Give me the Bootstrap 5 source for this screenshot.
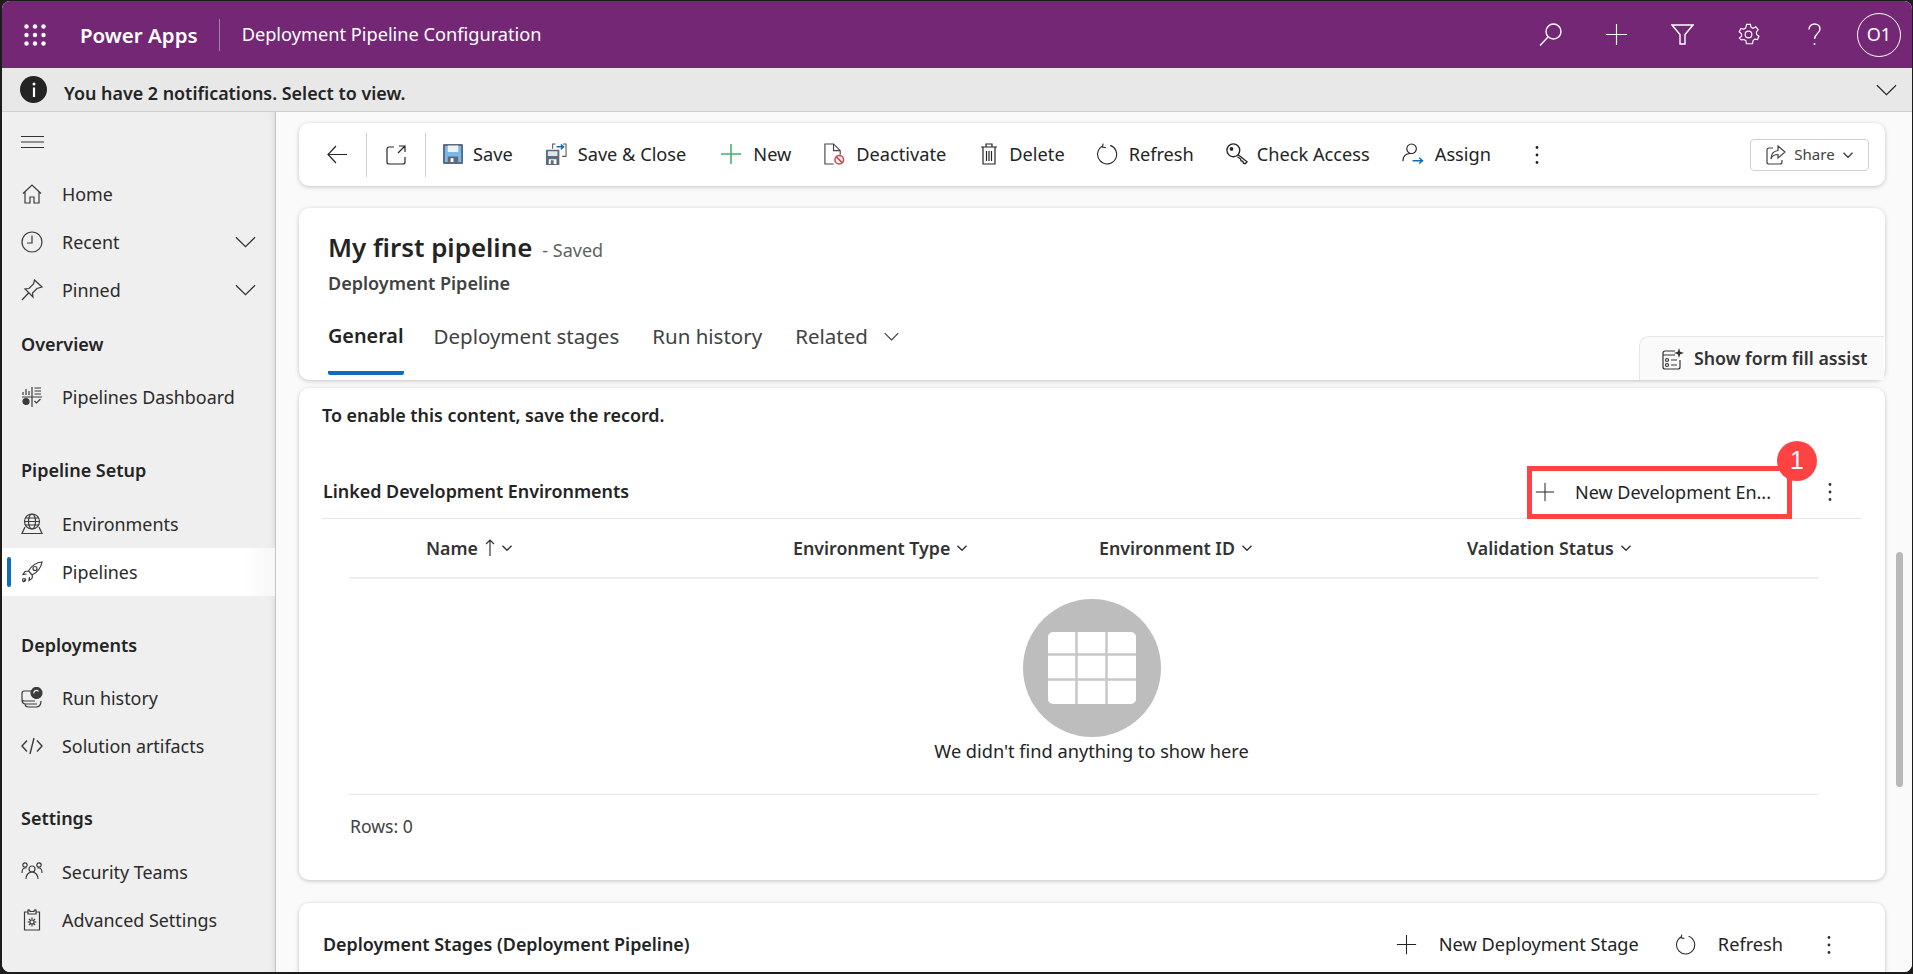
<!DOCTYPE html>
<html lang="en">
<head>
<meta charset="UTF-8">
<title>Deployment Pipeline Configuration - Power Apps</title>
<link href="https://cdn.jsdelivr.net/npm/bootstrap@5.3.0/dist/css/bootstrap.min.css" rel="stylesheet">
<style>
html, body { height: 100%; }
body { background: #1c1c1c; overflow: hidden; font-family: "Noto Sans", "Open Sans", sans-serif; font-size: 18px; color: #242424; }
svg { display: block; flex: none; fill: none; stroke: currentColor; stroke-width: 1.2; }
.app-frame { margin: 1px 1px 2px 2px; height: calc(100vh - 3px); border-radius: 8px; overflow: hidden; display: flex; flex-direction: column; background: #fafafa; }

.top-bar { height: 67px; background: #742774; color: #fff; flex: none; }
.waffle { margin-left: 22px; }
.brand { font-size: 20.5px; font-weight: 600; margin-left: 34px; padding-right: 21px; border-right: 1px solid #a77fa7; line-height: 32px; }
.app-title { font-size: 18.2px; margin-left: 22px; }
.top-ico { width: 23px; height: 23px; margin-right: 43px; }
.me-circle { width: 44px; height: 44px; border: 1px solid #fff; border-radius: 50%; font-size: 18px; margin-right: 11px; margin-left: -12px; }

.notif-bar { height: 44px; background: #e8e8e8; border-bottom: 1px solid #cfcfcf; flex: none; font-weight: 600; padding-left: 18px; padding-right: 15px; font-size: 17.9px; }
.notif-dot { width: 27px; height: 27px; border-radius: 50%; background: #242424; color: #fff; margin-right: 17px; }
.notif-text { padding-top: 7px; }

.side-nav { width: 274px; background: #efefef; border-right: 1px solid #c4c4c4; box-shadow: inset -8px 0 8px -8px #d8d8d8; flex: none; padding-top: 24px; }
.burger { margin: 0 0 22px 19px; color: #333; }
.side-link { height: 48px; padding: 0 19px; color: #2b2b2b; gap: 19px; font-size: 17.9px; position: relative; }
.side-link svg.lead-ico { width: 22px; height: 22px; color: #3a3a3a; }
.side-link.active-item { background: linear-gradient(90deg, #fff 88%, #f7f7f7); }
.active-bar { position: absolute; left: 5px; top: 9px; width: 4px; height: 30px; background: #0f6cbd; border-radius: 2px; }
.side-head { font-weight: 600; font-size: 18px; padding-left: 19px; line-height: 24px; color: #242424; margin-top: 37px; margin-bottom: 18px; }
.side-head.first-head { margin-top: 18px; margin-bottom: 17px; }
.side-head.deploy-head { margin-bottom: 17px; }
.side-head.settings-head { margin-top: 36px; }

.main-pane { background: #fafafa; padding: 11px 27px 0 23px; position: relative; overflow: hidden; }
.float-card { border: 0; border-radius: 10px; background: #fff; box-shadow: 0 1px 4px rgba(0,0,0,.22); flex: none; }
.cmd-bar { height: 63px; margin-bottom: 22px; padding: 0 16px 0 28px; gap: 32px; }
.cmd-btn { gap: 11px; color: #242424; font-size: 18.2px; white-space: nowrap; }
.cmd-btn svg { width: 22px; height: 22px; }
.cmd-btn svg.ico-save { width: 20px; height: 20px; margin-right: -1px; }
.cmd-btn svg.ico-trash { width: 18px; }
.cmd-btn.tight { gap: 9px; }
.cmd-first { margin-left: -2px; }
.cmd-new { margin-left: 2px; }
.cmd-delete { margin-left: 2px; }
.cmd-refresh { margin-left: -1px; }
.cmd-dots { margin-left: 4px; color: #212529; }
.cmd-sep { width: 1px; height: 44px; background: #d0d0d0; margin: 0 -13px; }
.share-btn { border: 1px solid #d1d1d1; border-radius: 4px; width: 119px; height: 32px; gap: 8px; font-size: 15px; color: #424242; padding: 0; }

.rec-card { height: 172px; margin-bottom: 8px; padding: 20px 0 0 29px; }
.rec-title { font-size: 25.9px; font-weight: 600; line-height: 38px; color: #242424; }
.rec-saved { font-size: 18px; color: #616161; margin-left: 10px; font-weight: 400; }
.rec-type { font-weight: 600; font-size: 18px; line-height: 24px; margin-top: 2px; color: #424242; }
.tab-row { height: 88px; gap: 33px; }
.rec-tab { padding-top: 29px; height: 80px; line-height: 24px; font-size: 20.5px; color: #424242; white-space: nowrap; }
.rec-tab.on { font-size: 19.8px; font-weight: 600; border-bottom: 4px solid #0f6cbd; border-radius: 0 0 2px 2px; color: #242424; margin-right: -3px; }
.tab-chev { margin-top: 8px; stroke-width: 1.8; }
.assist-tab { width: 245px; height: 44px; margin-right: 1px; background: #fafafa; border: 1px solid #e6e6e6; border-bottom: 0; border-right: 0; border-radius: 10px 0 0 0; font-weight: 600; font-size: 17.8px; gap: 10px; padding-left: 22px; color: #333; white-space: nowrap; }

.sec-card { height: 492px; margin-bottom: 23px; padding: 15px 24px 0 23px; }
.save-note { font-weight: 600; font-size: 17.9px; line-height: 24px; margin-bottom: 39px; }
.sec-head { height: 53px; border-bottom: 1px solid #e6e6e6; }
.sec-name { font-weight: 600; font-size: 17.9px; padding-left: 1px; }
.sec-head .sec-name { margin-top: -2px; }
.red-box { width: 265px; height: 53px; border: 5px solid #ff4343; padding-left: 3px; gap: 20px; position: relative; font-size: 18px; white-space: nowrap; }
.num-pin { position: absolute; right: -30px; top: -30px; width: 40px; height: 40px; border-radius: 50%; background: #ff4343; color: #fff; font-family: "Liberation Sans", sans-serif; font-size: 25px; }
.dot-col { width: 20px; margin: 0 21px 0 28px; color: #333; }
.dot-col svg { width: 20px; height: 20px; }
.env-grid { margin: 0 43px 0 27px; }
.env-tbl { table-layout: fixed; width: 100%; margin: 0; }
.env-tbl th { height: 59px; padding: 0; vertical-align: middle; font-weight: 600; font-size: 17.8px; border-bottom: 2px solid #eee; color: #333; }
.env-tbl th:first-child { padding-left: 77px; }
.col-name { width: 444px; }
.col-type { width: 306px; }
.col-id { width: 368px; }
.th-wrap { gap: 7px; }
.mini-chev { width: 10px; height: 6px; stroke-width: 3; }
.empty-note { padding: 20px 0 0 16px; height: 216px; border-bottom: 1px solid #e6e6e6; font-size: 18.2px; }
.empty-disc { width: 138px; height: 138px; border-radius: 50%; background: #bdbdbd; margin-bottom: 2px; }
.empty-line { line-height: 24px; }
.row-count { margin-top: 19px; line-height: 24px; color: #424242; font-size: 17.6px; padding-left: 1px; }

.low-card { height: 100px; padding: 28px 25px 0 23px; }
.low-btn { gap: 22px; font-size: 18.2px; white-space: nowrap; }
.low-btn svg { width: 21px; height: 21px; }
.low-refresh { margin-left: 36px; }
.low-dots { margin: 4px 21px 0 36px; }
.fake-scroll { position: absolute; left: 1620px; top: 440px; width: 7px; height: 235px; border-radius: 4px; background: #b9b9b9; }
</style>
</head>
<body>
<svg width="0" height="0" class="position-absolute">
  <symbol id="i-plus" viewBox="0 0 24 24"><path d="M12 1v22M1 12h22"/></symbol>
  <symbol id="i-kebab" viewBox="0 0 20 20"><g fill="currentColor" stroke="none"><circle cx="10" cy="2.5" r="1.4"/><circle cx="10" cy="10" r="1.4"/><circle cx="10" cy="17.5" r="1.4"/></g></symbol>
  <symbol id="i-refresh" viewBox="0 0 24 24"><path d="M15.5 2.6A10.4 10.4 0 1 1 7 3.4"/><path d="M7.8 .8 7 4.4l3.8 .8"/></symbol>
  <symbol id="i-chev" viewBox="0 0 22 12"><path d="M1 1l10 10L21 1"/></symbol>
</svg>

<div class="app-frame">
  <header class="top-bar d-flex align-items-center">
    <svg class="waffle" width="22" height="22" viewBox="0 0 22 22"><g fill="#fff" stroke="none"><circle cx="2.5" cy="2.5" r="2.2"/><circle cx="11" cy="2.5" r="2.2"/><circle cx="19.5" cy="2.5" r="2.2"/><circle cx="2.5" cy="11" r="2.2"/><circle cx="11" cy="11" r="2.2"/><circle cx="19.5" cy="11" r="2.2"/><circle cx="2.5" cy="19.5" r="2.2"/><circle cx="11" cy="19.5" r="2.2"/><circle cx="19.5" cy="19.5" r="2.2"/></g></svg>
    <span class="brand">Power Apps</span>
    <span class="app-title">Deployment Pipeline Configuration</span>
    <div class="ms-auto d-flex align-items-center">
      <svg class="top-ico" viewBox="0 0 23 23"><g stroke-width="1.4"><circle cx="14.5" cy="8.5" r="7.5"/><path d="M9 14 1 22.5"/></g></svg>
      <svg class="top-ico"><use href="#i-plus"/></svg>
      <svg class="top-ico" viewBox="0 0 23 23"><path d="M1 2h21l-8 9.5V21H9v-9.5z" stroke-width="1.4"/></svg>
      <svg class="top-ico" viewBox="0 0 24 24"><circle cx="12" cy="12" r="3.5"/><path d="M10 1.500h4l.7 3 2.200 1 2.700-1.500 2.500 3-1.900 2.500.3 2.500 2.400 1.800-1.500 3.500-3-.4-1.800 1.800-.4 3H9.800l-.5-3-1.900-1.500-3 .4L2.500 15.700l2.300-2-.1-2.500-2.400-2L4 5.800l3 .6 2-1.100z"/></svg>
      <svg class="top-ico" viewBox="0 0 23 23"><path d="M6 6.500C6 3 8.500 1 11.500 1S17 3 17 6c0 4.500-5.500 4.500-5.500 10" stroke-width="1.4"/><circle cx="11.5" cy="21" r="1" fill="#fff" stroke="none"/></svg>
      <div class="me-circle d-flex align-items-center justify-content-center">O1</div>
    </div>
  </header>

  <div class="notif-bar d-flex align-items-center">
    <div class="notif-dot d-flex align-items-center justify-content-center">
      <svg width="4" height="15" viewBox="0 0 4 15"><circle cx="2" cy="2" r="1.5" fill="#fff" stroke="none"/><path d="M2 5.5V15" stroke="#fff" stroke-width="2.2"/></svg>
    </div>
    <span class="notif-text">You have 2 notifications. Select to view.</span>
    <svg class="ms-auto" width="21" height="12"><use href="#i-chev"/></svg>
  </div>

  <div class="d-flex flex-grow-1 overflow-hidden">
    <nav class="side-nav d-flex flex-column">
      <svg class="burger" width="23" height="12" viewBox="0 0 23 12"><path d="M0 .5h23M0 6h23M0 11.5h23"/></svg>
      <div class="side-link d-flex align-items-center"><svg class="lead-ico" viewBox="0 0 22 22"><path d="M2 10.5 11 2l9 8.5M4 9v11h5v-6h4v6h5V9"/></svg>Home</div>
      <div class="side-link d-flex align-items-center"><svg class="lead-ico" viewBox="0 0 22 22"><circle cx="11" cy="11" r="10"/><path d="M11 4.5V12H6"/></svg>Recent<svg class="ms-auto" width="21" height="12"><use href="#i-chev"/></svg></div>
      <div class="side-link d-flex align-items-center"><svg class="lead-ico" viewBox="0 0 22 22"><path d="M13.5 1 21 8l-5 1.500-4.500 4.500.5 4-8-8 4-.5L12.500 5zM7.500 14 1 21"/></svg>Pinned<svg class="ms-auto" width="21" height="12"><use href="#i-chev"/></svg></div>

      <div class="side-head first-head">Overview</div>
      <div class="side-link d-flex align-items-center"><svg class="lead-ico" viewBox="0 0 22 22"><path d="M11 1v20M1 11h20M2 9V6M5 9V3M8 9V5M13.5 2H20M13.5 5H20M13.5 8H20M13.5 15l2 2 4-4"/><circle cx="5" cy="15.5" r="3" fill="currentColor"/></svg>Pipelines Dashboard</div>

      <div class="side-head">Pipeline Setup</div>
      <div class="side-link d-flex align-items-center"><svg class="lead-ico" viewBox="0 0 22 22"><circle cx="11" cy="8.5" r="7.5"/><ellipse cx="11" cy="8.5" rx="3.5" ry="7.5"/><path d="M3.5 8.5h15M4.5 5h13M4.5 12h13M4 14l-3 6.500h20L18 14"/></svg>Environments</div>
      <div class="side-link active-item d-flex align-items-center"><span class="active-bar"></span><svg class="lead-ico" viewBox="0 0 22 22"><path d="M21 1c-6 .5-10 3-13.500 9L11 14c6-3 9-7 10-13zM7.500 10 4 10.500 2 13.500l3.500-.5M11.500 14.500l-.5 3-3 2 .5-3.500M2 21l3-3"/><circle cx="14" cy="7.5" r="2"/><circle cx="3" cy="19" r="1.5"/></svg>Pipelines</div>

      <div class="side-head deploy-head">Deployments</div>
      <div class="side-link d-flex align-items-center"><svg class="lead-ico" viewBox="0 0 22 22"><path d="M11 4H3a2 2 0 0 0-2 2v6a2 2 0 0 0 2 2h11M1 13c0 3 2 4 4 4h11M4 17c0 2 2 3 4 3h7c3 0 5-2 5-6"/><circle cx="15.5" cy="6" r="5.5" fill="currentColor"/><path d="M13 6.500a2.500 2.500 0 0 1 4.500-2" stroke="#efefef"/></svg>Run history</div>
      <div class="side-link d-flex align-items-center"><svg class="lead-ico" viewBox="0 0 22 22"><path d="M6 5.5 1 11l5 5.500M16 5.500l5 5.500-5 5.500M13 3 9 19" stroke-width="1.4"/></svg>Solution artifacts</div>

      <div class="side-head settings-head">Settings</div>
      <div class="side-link d-flex align-items-center"><svg class="lead-ico" viewBox="0 0 22 22"><circle cx="4" cy="4" r="2.2"/><circle cx="18" cy="4" r="2.2"/><circle cx="11" cy="8" r="3"/><path d="M1 12c0-3 1-5 3-5h1.500M21 12c0-3-1-5-3-5h-1.500M5 18c0-4 2.500-7 6-7s6 3 6 7"/></svg>Security Teams</div>
      <div class="side-link d-flex align-items-center"><svg class="lead-ico" viewBox="0 0 22 22"><path d="M7 3H3.500v18h15V3H15M7 1v4h8V1c-1-.5-2 0-2 1.500H9C9 1 8 .5 7 1z"/><circle cx="11" cy="13" r="2"/><path d="M11 8.5v2M11 15.500v2M6.500 13h2M13.500 13h2M8 10l1.500 1.500M14 10l-1.500 1.500M8 16l1.500-1.500M14 16l-1.500-1.500"/></svg>Advanced Settings</div>
    </nav>

    <main class="main-pane flex-grow-1 d-flex flex-column">
      <div class="card float-card cmd-bar flex-row align-items-center">
        <svg width="20" height="19" viewBox="0 0 20 19"><path d="M9 1 1 9.5 9 18M1 9.5h19"/></svg>
        <span class="cmd-sep"></span>
        <svg width="20" height="20" viewBox="0 0 20 20"><path d="M8 2H3a2 2 0 0 0-2 2v13a2 2 0 0 0 2 2h14a2 2 0 0 0 2-2v-5M12 8l7-7M13 1h6v6"/></svg>
        <span class="cmd-sep"></span>
        <div class="cmd-btn cmd-first d-flex align-items-center"><svg class="ico-save" viewBox="0 0 21 21"><g stroke="none"><path fill="#5d6b7a" d="M0 1a1 1 0 0 1 1-1h19a1 1 0 0 1 1 1v19a1 1 0 0 1-1 1H1a1 1 0 0 1-1-1z"/><path fill="#7ab9ea" d="M2 2h17v17H2z"/><path fill="#eef3f7" d="M5 1.500h11v7H5z"/><path fill="#5d6b7a" d="M5 13h11v8H5z"/><path fill="#fff" d="M8 15h3v4H8z"/></g></svg>Save</div>
        <div class="cmd-btn d-flex align-items-center"><svg viewBox="0 0 23 23"><g stroke="none"><path fill="#5d6b7a" d="M1 7h14v16H1z"/><path fill="#dfe6ec" d="M3 8.500h10v5H3z"/><path fill="#fff" d="M4 17h8v5H4z"/><path fill="#5d6b7a" d="M6 18h3v4H6z"/></g><path d="M12 4h7M16.500 1.500 19.500 4l-3 2.500" stroke="#0f6cbd" stroke-width="1.5"/><path d="M8 6V1h3M19 1h3v13h-4" stroke="#555" stroke-width="1.1"/></svg>Save &amp; Close</div>
        <div class="cmd-btn cmd-new d-flex align-items-center"><svg viewBox="0 0 24 24"><path d="M12 1v22M1 12h22" stroke="#3fb16f" stroke-width="1.7"/></svg>New</div>
        <div class="cmd-btn d-flex align-items-center"><svg viewBox="0 0 23 23"><path d="M11 22H2V1h9l7 7v4M11 1v7h7" stroke="#444"/><circle cx="17" cy="17.500" r="4.500" stroke="#e03e4a" stroke-width="1.6"/><path d="m14 14.500 6 6" stroke="#e03e4a" stroke-width="1.6"/></svg>Deactivate</div>
        <div class="cmd-btn cmd-delete d-flex align-items-center"><svg class="ico-trash" viewBox="0 0 18 22"><path d="M1 4h16M6 4V1h6v3M3 4v17h12V4M6.500 8v10M9 8v10M11.500 8v10"/></svg>Delete</div>
        <div class="cmd-btn cmd-refresh d-flex align-items-center"><svg><use href="#i-refresh"/></svg>Refresh</div>
        <div class="cmd-btn tight d-flex align-items-center"><svg viewBox="0 0 24 24"><g stroke-width="1.5"><circle cx="8" cy="8" r="7"/><path d="M13 12.500 23 20.500l-2 2-2-.5-.5-2-2-.5-.5-2L12.500 15"/><circle cx="6" cy="6.500" r="1.3" fill="currentColor"/></g></svg>Check Access</div>
        <div class="cmd-btn d-flex align-items-center"><svg viewBox="0 0 23 23"><circle cx="10" cy="6" r="5"/><path d="M1 19c0-5 3-8 8-8"/><path d="M11 18.500h10M18 15.500l3.500 3-3.500 3" stroke="#0f6cbd" stroke-width="1.5"/></svg>Assign</div>
        <svg class="cmd-dots" width="20" height="20"><use href="#i-kebab"/></svg>
        <button class="btn share-btn ms-auto d-flex align-items-center justify-content-center" type="button">
          <svg width="20" height="20" viewBox="0 0 20 20"><path d="M7 3H3a2 2 0 0 0-2 2v12a2 2 0 0 0 2 2h11a2 2 0 0 0 2-2v-2"/><path d="M12 1l7 6-7 6V9.500C8 9.500 6 11 5 14c0-5 3-8 7-8.500z"/></svg>
          Share
          <svg class="mini-chev"><use href="#i-chev"/></svg>
        </button>
      </div>

      <div class="card float-card rec-card">
        <div class="rec-title">My first pipeline<span class="rec-saved">- Saved</span></div>
        <div class="rec-type">Deployment Pipeline</div>
        <div class="tab-row d-flex">
          <div class="rec-tab on">General</div>
          <div class="rec-tab">Deployment stages</div>
          <div class="rec-tab">Run history</div>
          <div class="rec-tab d-flex gap-3"><span>Related</span><svg class="tab-chev" width="15" height="9"><use href="#i-chev"/></svg></div>
          <div class="assist-tab ms-auto align-self-end d-flex align-items-center">
            <svg width="22" height="22" viewBox="0 0 22 22"><path d="M13 3H3a2 2 0 0 0-2 2v14a2 2 0 0 0 2 2h13a2 2 0 0 0 2-2v-7M1 7h12M9 12h6M9 17h6"/><circle cx="5" cy="12" r="1.5"/><circle cx="5" cy="17" r="1.5"/><path d="M17 0l1.200 3.800L22 5l-3.800 1.200L17 10l-1.200-3.800L12 5l3.800-1.200z" fill="currentColor" stroke="none"/></svg>
            Show form fill assist
          </div>
        </div>
      </div>

      <div class="card float-card sec-card">
        <div class="save-note">To enable this content, save the record.</div>
        <div class="sec-head d-flex align-items-center">
          <span class="sec-name">Linked Development Environments</span>
          <div class="red-box ms-auto d-flex align-items-center">
            <svg width="20" height="20"><use href="#i-plus"/></svg>
            <span>New Development En...</span>
            <span class="num-pin d-flex align-items-center justify-content-center">1</span>
          </div>
          <div class="dot-col"><svg><use href="#i-kebab"/></svg></div>
        </div>
        <div class="env-grid">
          <table class="table table-borderless env-tbl">
            <colgroup><col class="col-name"><col class="col-type"><col class="col-id"><col></colgroup>
            <thead>
              <tr>
                <th><span class="th-wrap d-flex align-items-center">Name <svg width="10" height="18" viewBox="0 0 10 18"><path d="M5 17V1M1 5l4-4 4 4"/></svg><svg class="mini-chev"><use href="#i-chev"/></svg></span></th>
                <th><span class="th-wrap d-flex align-items-center">Environment Type <svg class="mini-chev"><use href="#i-chev"/></svg></span></th>
                <th><span class="th-wrap d-flex align-items-center">Environment ID <svg class="mini-chev"><use href="#i-chev"/></svg></span></th>
                <th><span class="th-wrap d-flex align-items-center">Validation Status <svg class="mini-chev"><use href="#i-chev"/></svg></span></th>
              </tr>
            </thead>
          </table>
          <div class="empty-note d-flex flex-column align-items-center">
            <div class="empty-disc d-flex align-items-center justify-content-center">
              <svg width="88" height="72" viewBox="0 0 88 72"><rect width="88" height="72" rx="5" fill="#fff" stroke="none"/><path d="M28.5 0v72M58.5 0v72M0 22.5h88M0 47.5h88" stroke="#c8c8c8" stroke-width="2.5"/></svg>
            </div>
            <div class="empty-line">We didn't find anything to show here</div>
          </div>
          <div class="row-count">Rows: 0</div>
        </div>
      </div>

      <div class="card float-card low-card flex-row align-items-start">
        <span class="sec-name">Deployment Stages (Deployment Pipeline)</span>
        <div class="low-btn ms-auto d-flex align-items-center"><svg><use href="#i-plus"/></svg>New Deployment Stage</div>
        <div class="low-btn low-refresh d-flex align-items-center"><svg><use href="#i-refresh"/></svg>Refresh</div>
        <div class="dot-col low-dots"><svg><use href="#i-kebab"/></svg></div>
      </div>
      <div class="fake-scroll"></div>
    </main>
  </div>
</div>
<script src="https://cdn.jsdelivr.net/npm/bootstrap@5.3.0/dist/js/bootstrap.bundle.min.js"></script>
</body>
</html>
